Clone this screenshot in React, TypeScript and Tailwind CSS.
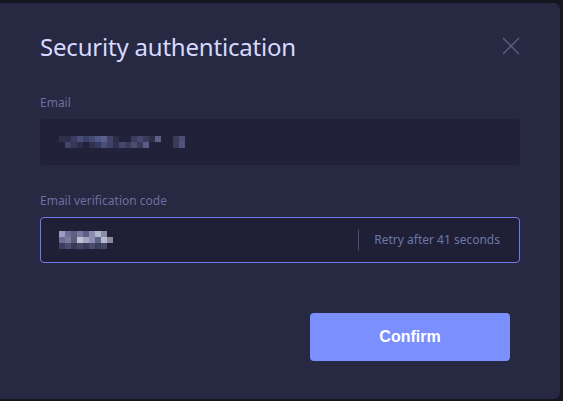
import React from "react";

const emailRows: string[][] = [
  ["#2f3049","#2c2d47","#3a3d61","#4a4e78","#3d4068","#454a75","#50578a","#5a5f8c","#404368","#2c2d46","#2a2b44","#2a2b44","#3b3d5e","#45486e","#3a3c5c","#2e2f48","#5c5f88","#2a2b44","#2a2b44","#3a3b55","#4b4e75","#2a2b44","#2a2b44","#2a2b44"],
  ["#2a2b44","#41436a","#363858","#2d2f4a","#2a2b44","#2f314e","#353860","#4a4d78","#3e4068","#2f3050","#45486e","#3a3b5b","#4b4d70","#3a3b58","#5a5d85","#2a2b44","#2a2b44","#2a2b44","#2a2b44","#3a3b55","#4f5380","#2a2b44","#2a2b44","#2a2b44"],
];
const codeRows: string[][] = [
  ["#9c9cc0","#6e6f96","#5e5f82","#7a7aa0","#5a6088","#8a8cb0","#b4b4cc","#8a8ca8","#2a2b44","#2a2b44","#2a2b44"],
  ["#6a6c92","#7a7c9e","#5c5c7a","#c0c0d6","#a6a6c0","#8a8fb4","#5c6488","#b8b8d0","#8a8a9c","#2a2b44","#2a2b44"],
  ["#3c3d5e","#4a4c70","#3a3b5a","#45476a","#3a3b5a","#4a4c70","#3c3d5c","#45476a","#2a2b44","#2a2b44","#2a2b44"],
];

function Mosaic({ rows, cell, base }: { rows: string[][]; cell: number; base: string }) {
  return (
    <div className="flex flex-col">
      {rows.map((r, i) => (
        <div key={i} className="flex">
          {r.map((c, j) => (
            <span key={j} style={{ width: cell, height: cell, background: c === "#2a2b44" ? base : c }} />
          ))}
        </div>
      ))}
    </div>
  );
}

export default function App() {
  return (
    <div className="w-[563px] h-[401px] bg-[#15161f] overflow-hidden pt-[3px] relative" style={{ fontFamily: "'Noto Sans', sans-serif" }}>
      <div className="w-[560px] h-[396px] bg-[#272842] rounded-r-[6px] px-[40px] pt-[26px] flex flex-col">
        <div className="flex items-start justify-between">
          <h1 className="text-[24px] leading-[36px] text-[#d6daff] tracking-[-0.2px]">Security authentication</h1>
          <button className="w-[18px] h-[18px] mt-[8px] text-[#5b5e7c]">
            <svg viewBox="0 0 18 18" width="18" height="18" fill="none" stroke="currentColor" strokeWidth="1.3">
              <path d="M1 1 L17 17 M17 1 L1 17" />
            </svg>
          </button>
        </div>
        <div className="mt-[30px] text-[12px] leading-[16px] text-[#6b70a0]">Email</div>
        <div className="mt-[8px] h-[46px] w-[480px] rounded-[4px] bg-[#21223a] flex items-center pl-[19px]">
          <Mosaic rows={emailRows} cell={6} base="#21223a" />
        </div>
        <div className="mt-[28px] text-[12px] leading-[16px] text-[#6b70a0]">Email verification code</div>
        <div className="mt-[8px] h-[46px] w-[480px] rounded-[4px] bg-[#1f2036] border border-[#6b7ced] flex items-center pl-[18px] pr-[19px]">
          <Mosaic rows={codeRows} cell={6} base="#1f2036" />
          <div className="flex-1" />
          <div className="w-px h-[20px] bg-[#4a4e78]" />
          <div className="ml-[15px] text-[12px] text-[#6f76a8]">Retry after 41 seconds</div>
        </div>
        <div className="mt-[50px] flex justify-end pr-[10px]">
          <button className="w-[200px] h-[48px] rounded-[4px] bg-[#7b8ffe] text-white text-[16px] font-bold" style={{ fontFamily: "'Liberation Sans', Arial, sans-serif" }}>
            Confirm
          </button>
        </div>
      </div>
    </div>
  );
}
